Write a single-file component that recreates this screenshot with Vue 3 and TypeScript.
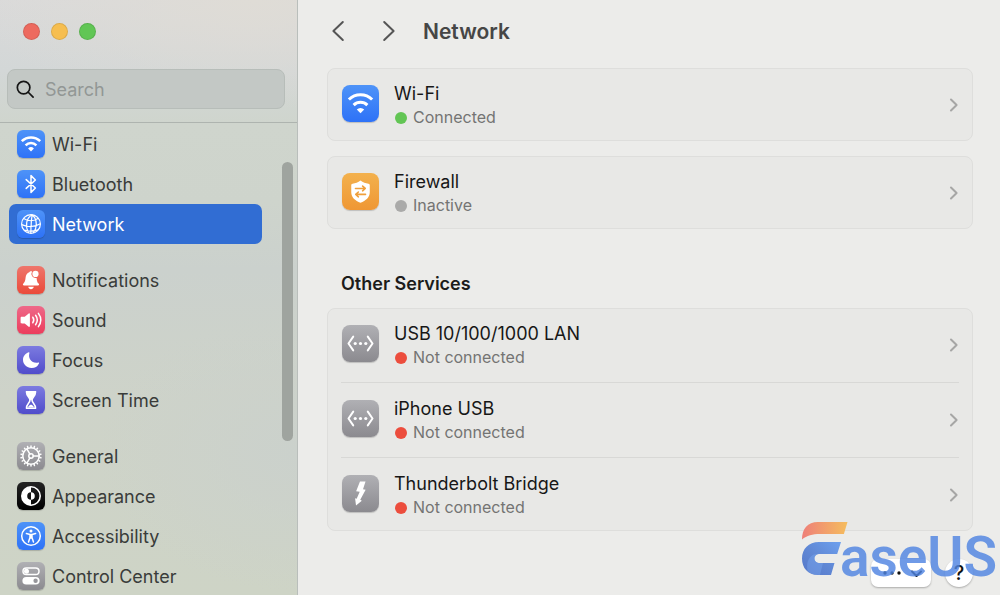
<script setup lang="ts">
import { ref } from 'vue'

interface NavItem {
  id: string
  label: string
  tone: string
}

interface Service {
  name: string
  status: string
  state: 'on' | 'idle' | 'off'
  icon: string
  tone: string
}

const navGroups: NavItem[][] = [
  [
    { id: 'wifi', label: 'Wi-Fi', tone: 'blue' },
    { id: 'bluetooth', label: 'Bluetooth', tone: 'blue' },
    { id: 'network', label: 'Network', tone: 'blue' },
  ],
  [
    { id: 'bell', label: 'Notifications', tone: 'red' },
    { id: 'sound', label: 'Sound', tone: 'pink' },
    { id: 'moon', label: 'Focus', tone: 'indigo' },
    { id: 'hourglass', label: 'Screen Time', tone: 'indigo' },
  ],
  [
    { id: 'gear', label: 'General', tone: 'gray' },
    { id: 'appearance', label: 'Appearance', tone: 'black' },
    { id: 'accessibility', label: 'Accessibility', tone: 'blue' },
    { id: 'control', label: 'Control Center', tone: 'gray' },
  ],
]

const primary: Service[] = [
  { name: 'Wi-Fi', status: 'Connected', state: 'on', icon: 'wifi', tone: 'blue' },
  { name: 'Firewall', status: 'Inactive', state: 'idle', icon: 'shield', tone: 'orange' },
]

const others: Service[] = [
  { name: 'USB 10/100/1000 LAN', status: 'Not connected', state: 'off', icon: 'ethernet', tone: 'gray' },
  { name: 'iPhone USB', status: 'Not connected', state: 'off', icon: 'ethernet', tone: 'gray' },
  { name: 'Thunderbolt Bridge', status: 'Not connected', state: 'off', icon: 'bolt', tone: 'gray' },
]

const sections = [
  { title: '', cards: primary.map((s) => [s]) },
  { title: 'Other Services', cards: [others] },
]

const active = ref('network')
const query = ref('')
const teeth = Array.from({ length: 18 }, (_, i) => i * 20)
</script>

<template>
  <div class="window">
    <aside class="sidebar">
      <div class="lights">
        <button class="light close" type="button" aria-label="Close"></button>
        <button class="light minimize" type="button" aria-label="Minimize"></button>
        <button class="light zoom" type="button" aria-label="Zoom"></button>
      </div>
      <label class="search">
        <svg viewBox="0 0 20 20" aria-hidden="true">
          <circle cx="8" cy="8" r="6.6" />
          <path d="M12.9 12.9 18 18" />
        </svg>
        <input v-model="query" type="text" placeholder="Search" aria-label="Search" />
      </label>
      <div class="scroller">
        <nav class="nav">
          <ul v-for="(group, g) in navGroups" :key="g">
            <li v-for="item in group" :key="item.id">
              <a href="#" :class="{ active: active === item.id }" @click.prevent="active = item.id">
                <span class="tile" :class="item.tone">
                  <svg viewBox="0 0 28 28" aria-hidden="true">
                    <template v-if="item.id === 'wifi'">
                      <path class="line w26" d="M4.800 11.200a13 13 0 0 1 18.400 0M8.600 15.300a7.700 7.700 0 0 1 10.800 0" />
                      <path class="solid" d="M14 21.400 11.100 18.500a4.100 4.100 0 0 1 5.800 0z" />
                    </template>
                    <path v-else-if="item.id === 'bluetooth'" class="line w14" d="M9.200 9.600 18.400 18 14 22.400V5.600l4.400 4.400-9.200 8.400" />
                    <g v-else-if="item.id === 'network'" class="line w12">
                      <circle cx="14" cy="14" r="9.400" />
                      <path d="M15.200 4.700C9 8 8 16 11.600 23M15.200 4.700c5.200 4.300 5.200 12.800 1 18.300M15.200 4.700c-1 5.300-1.200 12.300-1.400 18.500M6.600 8.600c4.600 2.800 10.500 2.700 14.700-.4M4.700 14.600c6 2.600 13.400 2.400 18.600-.8M7.200 20.200c4.200 1.200 9.400 1.100 13.800-.3" />
                    </g>
                    <template v-else-if="item.id === 'bell'">
                      <path class="solid" d="M14 5.200c.4 0 .8.100 1.100.3a4.200 4.200 0 0 0 4.500 6.400c.2 2.700.6 4.400 2 5.700.9.800.5 1.900-.6 1.900H7c-1.100 0-1.500-1.100-.6-1.900 1.500-1.500 2-3.300 2.200-6 .2-2.800 1.500-4.500 3.700-5.300.2-.7.900-1.100 1.700-1.100zM11.200 20.800h5.600c-.3 1.500-1.400 2.400-2.800 2.400s-2.500-.9-2.800-2.400z" />
                      <circle class="solid" cx="18.500" cy="7.900" r="3.100" />
                    </template>
                    <template v-else-if="item.id === 'sound'">
                      <path class="solid" d="M4.800 10.800h2.900l4-3.300c.6-.5 1.200-.2 1.200.6v12c0 .8-.6 1.100-1.200.6l-4-3.300H4.800c-.8 0-1.200-.4-1.200-1.200v-4.200c0-.8.400-1.200 1.200-1.200z" />
                      <path class="line w14" d="M15.800 11.200c1.200 1.700 1.200 3.900 0 5.600M18.600 9.300c2.100 2.900 2.100 6.500 0 9.400M21.400 7.400c3 4.100 3 9.100 0 13.200" />
                    </template>
                    <path v-else-if="item.id === 'moon'" class="solid" d="M11.700 6.300c.5-.2.900.2.700.7-1.700 5.700 2.700 10.900 8.900 9.600.6-.1 1 .3.700.8a8.300 8.300 0 0 1-7.500 4.600c-4.800 0-8.500-3.600-8.500-8.200 0-3.400 2.200-6.300 5.700-7.500z" />
                    <template v-else-if="item.id === 'hourglass'">
                      <path class="line w16" d="M8.800 5.900h10.400M8.800 22.300h10.400M9.500 6c0 4.400 3.500 5.300 3.500 8s-3.500 4-3.500 8M18.500 6c0 4.400-3.500 5.300-3.500 8s3.500 4 3.500 8" />
                      <path class="solid" d="M9.700 6h8.600c-.3 4.500-3.300 5-3.500 8h-1.600c-.2-3-3.200-3.500-3.500-8zM11 21.500c.5-2 2-2.500 3-3 1 .5 2.500 1 3 3z" />
                    </template>
                    <g v-else-if="item.id === 'gear'" class="line w14">
                      <circle cx="14" cy="14" r="8.200" />
                      <circle cx="14" cy="14" r="2.200" />
                      <path d="M16.200 14h6M12.900 12.100l-3-5.200M12.900 15.900l-3 5.200" />
                      <path v-for="angle in teeth" :key="angle" d="M14 4.900V3.900" :transform="`rotate(${angle} 14 14)`" />
                    </g>
                    <template v-else-if="item.id === 'appearance'">
                      <circle class="line w16" cx="14" cy="14" r="9.200" />
                      <path class="solid" d="M14 4.800a9.200 9.200 0 0 0 0 18.400v-5.400a3.800 3.800 0 0 1 0-7.600zM14 10.200a3.800 3.800 0 0 1 0 7.600z" />
                    </template>
                    <template v-else-if="item.id === 'accessibility'">
                      <circle class="line w14" cx="14" cy="14" r="9.300" />
                      <circle class="solid" cx="14" cy="8.900" r="1.500" />
                      <path class="line w14" d="M9.400 11.600l3.600.8h2l3.600-.8M13 12.400v3.200L11.500 20M15 12.400v3.200l1.500 4.400M14 12.500v3.500" />
                    </template>
                    <template v-else>
                      <rect class="line w14" x="6" y="6" width="16" height="6.600" rx="3.300" />
                      <circle class="solid" cx="9.500" cy="9.300" r="2.500" />
                      <path class="solid" fill-rule="evenodd" d="M9.200 15h9.600a3.800 3.800 0 0 1 0 7.600H9.200a3.800 3.800 0 0 1 0-7.600zm9.400 1.600a2.200 2.200 0 1 0 0 4.400 2.200 2.200 0 0 0 0-4.400z" />
                    </template>
                  </svg>
                </span>
                {{ item.label }}
              </a>
            </li>
          </ul>
        </nav>
        <div class="track"><div class="thumb"></div></div>
      </div>
    </aside>

    <main class="content">
      <header class="toolbar">
        <button type="button" aria-label="Back">
          <svg viewBox="0 0 14 22"><path d="M11.800 2 2.400 11l9.400 9" /></svg>
        </button>
        <button type="button" aria-label="Forward">
          <svg viewBox="0 0 14 22"><path d="M2.200 2l9.400 9-9.400 9" /></svg>
        </button>
        <h1>Network</h1>
      </header>

      <section v-for="section in sections" :key="section.title" class="section">
        <h2 v-if="section.title">{{ section.title }}</h2>
        <ul v-for="(card, c) in section.cards" :key="c" class="card">
          <li v-for="service in card" :key="service.name">
            <a class="service" href="#" @click.prevent>
              <span class="tile large" :class="service.tone">
                <svg viewBox="0 0 28 28" aria-hidden="true">
                  <template v-if="service.icon === 'wifi'">
                    <path class="line w24" d="M5.200 11a12.400 12.400 0 0 1 17.600 0M8.800 15.200a7.400 7.400 0 0 1 10.400 0" />
                    <path class="solid" d="M14 21.300 11.200 18.500a4 4 0 0 1 5.600 0z" />
                  </template>
                  <template v-else-if="service.icon === 'shield'">
                    <path class="solid" d="M14 5.700c1.800 1.500 3.900 2.200 6 2.400.7.100 1 .5 1 1.100v5.300c0 4-2.900 6.200-7 8-4.100-1.800-7-4-7-8V9.200c0-.6.300-1 1-1.100 2.100-.2 4.200-.9 6-2.400z" />
                    <path class="cut" d="M10.200 11.700h7.400M15.600 9.900l2 1.800-2 1.800M17.800 16.200h-7.400M12.400 14.400l-2 1.800 2 1.800" />
                  </template>
                  <template v-else-if="service.icon === 'ethernet'">
                    <path class="line w14" d="M8.500 8.800 4.900 14l3.600 5.200M19.500 8.800l3.600 5.200-3.600 5.200" />
                    <circle class="solid" cx="10" cy="14" r="1.200" />
                    <circle class="solid" cx="14" cy="14" r="1.200" />
                    <circle class="solid" cx="18" cy="14" r="1.200" />
                  </template>
                  <path v-else class="solid" d="M13.600 4.900h4.200l-1.900 5.900 2 .3-4.100 7.700 1.200.6-4.400 3.700-.7-5.600 1.200.5 2.300-5.400-2.700-.3z" />
                </svg>
              </span>
              <span class="info">
                <span class="name">{{ service.name }}</span>
                <span class="status"><i class="dot" :class="service.state"></i>{{ service.status }}</span>
              </span>
              <svg class="chevron" viewBox="0 0 10 14" aria-hidden="true"><path d="M2 1.500 7.600 7 2 12.500" /></svg>
            </a>
          </li>
        </ul>
      </section>

      <footer class="actions">
        <button class="more" type="button" aria-label="More options">
          <svg viewBox="0 0 60 30">
            <circle cx="14" cy="14" r="1.700" />
            <circle cx="21" cy="14" r="1.700" />
            <circle cx="28" cy="14" r="1.700" />
            <path d="m41 12.500 4.500 4.500 4.500-4.500" />
          </svg>
        </button>
        <button class="help" type="button" aria-label="Help">?</button>
      </footer>
    </main>

    <div class="brand">
      <svg viewBox="0 0 48 56" aria-hidden="true">
        <defs>
          <linearGradient id="brand-warm" x1="0" x2="1" y1="0" y2="0">
            <stop offset="0" stop-color="#ee7f79" />
            <stop offset="1" stop-color="#f5bd5e" />
          </linearGradient>
          <linearGradient id="brand-cool" x1="0" x2="1" y1="1" y2="0">
            <stop offset="0" stop-color="#5577c8" />
            <stop offset="0.500" stop-color="#6189d6" />
            <stop offset="1" stop-color="#6da0ee" />
          </linearGradient>
        </defs>
        <path fill="url(#brand-warm)" d="M2 18.500C2 8 7.500 1 18 1h29.500l-3.600 12H20C12.500 13 7 14.500 2 18.500z" />
        <path fill="url(#brand-cool)" d="M19 21h22l-3.800 12H20c-3.500 0-5.500 2-5.500 4.500S16.500 42 20 42h14.500L31 54H18C8 54 2 47 2 37.500S8.500 21 19 21z" />
        <path fill="#7ba6ee" opacity="0.450" d="M14.500 37.500c0-2.500 2-4.500 5.500-4.500h-4C9.500 34 6 40 7.500 50c3 2.800 6.500 4 10.500 4h2l3-12h-3c-3.500 0-5.500-2-5.500-4.500z" />
      </svg>
      <span>aseUS</span>
    </div>
  </div>
</template>

<style>
body {
  margin: 0;
}
</style>

<style scoped>
* {
  box-sizing: border-box;
}

.window {
  position: relative;
  display: flex;
  height: 100vh;
  overflow: hidden;
  background: #ececea;
  color: #1c1c1b;
  font-family: Inter, "Liberation Sans", sans-serif;
  font-size: 18px;
}

button {
  padding: 0;
  border: 0;
  background: none;
  font: inherit;
}

ul {
  margin: 0;
  padding: 0;
  list-style: none;
}

a {
  color: inherit;
  text-decoration: none;
}

.sidebar {
  display: flex;
  flex: 0 0 298px;
  flex-direction: column;
  min-width: 0;
  border-right: 1px solid #b9bebb;
  background:
    radial-gradient(ellipse 280px 110px at 85% 0, #dfdcd6, transparent),
    radial-gradient(ellipse 200px 140px at 100% 76%, #cbd1cc, transparent),
    linear-gradient(180deg, #dadada 0, #d3d7d7 70px, #cfd5cd 125px, #ced4cc 200px, #cbd1cd 270px, #ced3c9 400px, #ced4c6 100%);
}

.lights {
  display: flex;
  gap: 11px;
  padding: 23px 23px 0;
}

.light {
  width: 17px;
  height: 17px;
  border: 1px solid rgb(0 0 0 / 10%);
  border-radius: 50%;
}

.close {
  background: #ed6a5f;
}

.minimize {
  background: #f6be50;
}

.zoom {
  background: #61c655;
}

.search {
  display: flex;
  align-items: center;
  gap: 10px;
  height: 40px;
  margin: 29px 12px 13px 7px;
  padding: 0 8px;
  border: 1px solid #b7bdb9;
  border-radius: 8px;
  background: #c3c8c5;
}

.search svg {
  flex: none;
  width: 19px;
  height: 19px;
  fill: none;
  stroke: #151515;
  stroke-width: 1.8;
  stroke-linecap: round;
}

.search input {
  flex: 1;
  min-width: 0;
  padding: 0;
  border: 0;
  outline: 0;
  background: none;
  color: #2b2b2b;
  font: inherit;
}

.search input::placeholder {
  color: #929795;
  opacity: 1;
}

.scroller {
  display: flex;
  flex: 1;
  min-height: 0;
  overflow: hidden;
  border-top: 1px solid #aeb4af;
}

.nav {
  display: flex;
  flex: 1;
  flex-direction: column;
  gap: 16px;
  padding: 1px 20px 0 9px;
}

.nav a {
  display: flex;
  align-items: center;
  gap: 7px;
  height: 40px;
  padding: 0 8px;
  border-radius: 7px;
  color: #3a3c3a;
}

.nav a.active {
  background: #316dd3;
  color: #fff;
}

.track {
  flex: 0 0 15px;
  padding-top: 39px;
}

.thumb {
  width: 11px;
  height: 279px;
  border-radius: 6px;
  background: #9fa49f;
}

.tile {
  flex: none;
  width: 28px;
  height: 28px;
  border-radius: 6px;
  box-shadow: 0 1px 1px rgb(0 0 0 / 18%);
}

.tile.large {
  width: 37px;
  height: 37px;
  border-radius: 8px;
}

.tile svg {
  display: block;
  width: 100%;
  height: 100%;
}

.blue {
  background: linear-gradient(#4e93f8, #2e72f7);
}

.red {
  background: linear-gradient(#ee766c, #eb4a3a);
}

.pink {
  background: linear-gradient(#ee6989, #ec3d5c);
}

.indigo {
  background: linear-gradient(#7c7be0, #504ccb);
}

.gray {
  background: linear-gradient(#b0b0b4, #8b8a8f);
}

.black {
  background: linear-gradient(#242424, #000);
}

.orange {
  background: linear-gradient(#f3b14d, #ef9734);
}

.line {
  fill: none;
  stroke: #fff;
  stroke-linejoin: round;
}

.w12 {
  stroke-width: 1.2;
}

.w14 {
  stroke-width: 1.5;
  stroke-linecap: round;
}

.w16 {
  stroke-width: 1.6;
}

.w24 {
  stroke-width: 2.3;
}

.w26 {
  stroke-width: 2.5;
}

.solid {
  fill: #fff;
}

.cut {
  fill: none;
  stroke: #f0a03c;
  stroke-width: 1.2;
  stroke-linecap: round;
  stroke-linejoin: round;
}

.content {
  flex: 1;
  min-width: 0;
  padding: 0 27px 0 29px;
}

.toolbar {
  display: flex;
  align-items: center;
  height: 68px;
  padding: 0 4px 6px;
  color: #464646;
}

.toolbar button {
  width: 14px;
  height: 22px;
  margin-right: 37px;
}

.toolbar button + button {
  margin-right: 27px;
}

.toolbar svg {
  display: block;
  width: 14px;
  height: 22px;
  fill: none;
  stroke: #555;
  stroke-width: 2;
  stroke-linecap: round;
  stroke-linejoin: round;
}

h1 {
  margin: 0;
  font-size: 21px;
  font-weight: 600;
}

h2 {
  margin: 43px 14px 12px;
  font-size: 18px;
  font-weight: 600;
  line-height: 24px;
}

.card {
  border: 1px solid #dededc;
  border-radius: 8px;
  background: #e8e8e6;
}

.card + .card {
  margin-top: 15px;
}

.service {
  display: flex;
  align-items: center;
  gap: 15px;
  margin: 0 13px;
  padding: 13px 0 11px 1px;
}

li:not(:last-child) > .service {
  padding-bottom: 13px;
}

li + li > .service {
  padding-top: 14px;
  border-top: 1px solid #d8d8d6;
}

.service .tile {
  align-self: flex-start;
  margin-top: 3px;
}

.info {
  display: flex;
  flex: 1;
  flex-direction: column;
}

.name {
  color: #171717;
  line-height: 24px;
}

.status {
  display: flex;
  align-items: center;
  gap: 6px;
  color: #747473;
  font-size: 16px;
  line-height: 23px;
}

.dot {
  width: 12px;
  height: 12px;
  margin-left: 1px;
  border-radius: 50%;
}

.on {
  background: #62c554;
}

.idle {
  background: #aaaaa9;
}

.off {
  background: #ec4d3d;
}

.chevron {
  width: 10px;
  height: 14px;
  margin-bottom: 2px;
  fill: none;
  stroke: #a6a6a5;
  stroke-width: 2;
  stroke-linecap: round;
  stroke-linejoin: round;
}

.actions {
  display: flex;
  justify-content: flex-end;
  gap: 14px;
  padding-top: 28px;
}

.more,
.help {
  height: 28px;
  background: #fff;
  box-shadow: 0 1px 2px rgb(0 0 0 / 28%);
}

.more {
  width: 60px;
  border-radius: 7px;
}

.more svg {
  display: block;
  width: 100%;
  fill: #111;
}

.more path {
  fill: none;
  stroke: #111;
  stroke-width: 2;
  stroke-linecap: round;
  stroke-linejoin: round;
}

.help {
  width: 28px;
  border-radius: 50%;
  color: #111;
  font-size: 20px;
  font-weight: 500;
}

.brand {
  position: absolute;
  right: 3px;
  bottom: 10px;
  display: flex;
  align-items: flex-end;
  pointer-events: none;
}

.brand svg {
  width: 48px;
  height: 62px;
  margin-bottom: 5px;
}

.brand span {
  margin-left: -8px;
  color: #5085e2;
  font-family: Roboto, "Open Sans", sans-serif;
  font-size: 55px;
  font-weight: 600;
  line-height: 56px;
  opacity: 0.82;
}
</style>
